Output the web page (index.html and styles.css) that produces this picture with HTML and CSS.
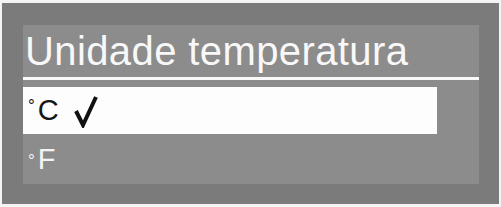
FILE: index.html
```html
<!DOCTYPE html>
<html lang="pt">
<head>
    <meta charset="UTF-8">
    <meta name="viewport" content="width=device-width, initial-scale=1.0">
    <title>Unidade temperatura</title>
    <link rel="stylesheet" href="styles.css">
</head>
<body>
    <div id="frame">
        <div id="panel">
            <h1 id="title">Unidade temperatura</h1>
            <div class="rule"></div>
            <div class="option selected">
                <span class="deg">°</span><span class="unit">C</span>
                <svg class="check" width="24" height="32" viewBox="0 0 24 32">
                    <path d="M2 15 L9 29 L22 1" fill="none" stroke="#111" stroke-width="4" stroke-linejoin="miter"/>
                </svg>
            </div>
            <div class="option">
                <span class="deg">°</span><span class="unit">F</span>
            </div>
        </div>
    </div>
</body>
</html>
```

FILE: styles.css
```css
* {
    box-sizing: border-box;
}
html, body {
    margin: 0;
    background-color: #f4f4f4;
    font-family: "Liberation Sans", Arial, sans-serif;
}
#frame {
    margin: 3px 2px;
    width: 497px;
    height: 201px;
    background-color: #7b7b7b;
    padding: 22px 20px 20px 21px;
}
#panel {
    height: 159px;
    background-color: #8c8c8c;
}
#title {
    margin: 0;
    padding: 6px 0 0 2px;
    font-size: 40px;
    line-height: 40px;
    font-weight: normal;
    color: #f8f8f8;
    letter-spacing: 0.4px;
}
.rule {
    height: 3px;
    margin-top: 6px;
    background-color: #f8f8f8;
}
.option {
    display: flex;
    align-items: center;
    width: 414px;
    height: 47px;
    margin-top: 7px;
    padding-left: 5px;
    font-size: 29px;
    color: #f4f4f4;
}
.option + .option {
    margin-top: 0;
    padding-top: 4px;
}
.option.selected {
    background-color: #fdfdfd;
    color: #161616;
}
.deg {
    font-size: 17px;
    align-self: flex-start;
    margin-top: 9px;
    margin-right: 3px;
}
.option + .option .deg {
    margin-top: 13px;
}
.check {
    margin-left: 15px;
    margin-top: 2px;
}
```
